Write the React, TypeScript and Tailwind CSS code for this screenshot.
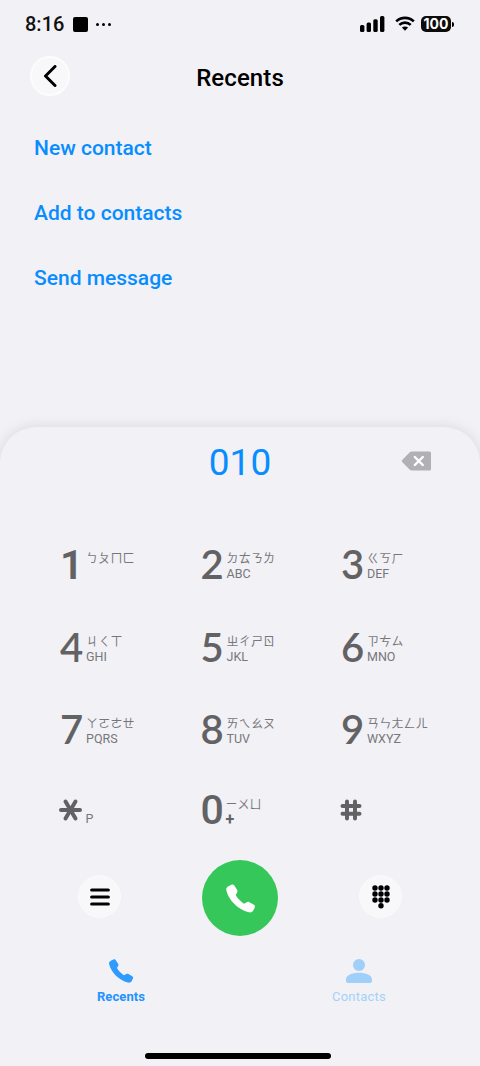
import React from "react";

const links = ["New contact", "Add to contacts", "Send message"];

const keys = [
  { digit: "1", zhuyin: "ㄅㄆㄇㄈ", letters: "" },
  { digit: "2", zhuyin: "ㄉㄊㄋㄌ", letters: "ABC" },
  { digit: "3", zhuyin: "ㄍㄎㄏ", letters: "DEF" },
  { digit: "4", zhuyin: "ㄐㄑㄒ", letters: "GHI" },
  { digit: "5", zhuyin: "ㄓㄔㄕㄖ", letters: "JKL" },
  { digit: "6", zhuyin: "ㄗㄘㄙ", letters: "MNO" },
  { digit: "7", zhuyin: "ㄚㄛㄜㄝ", letters: "PQRS" },
  { digit: "8", zhuyin: "ㄞㄟㄠㄡ", letters: "TUV" },
  { digit: "9", zhuyin: "ㄢㄣㄤㄥㄦ", letters: "WXYZ" },
];

const PHONE_PATH =
  "M6.600 1.800 3.500 3.300C1.600 4.300 1 5.600 1.400 7.500 3.200 17 13.500 27.800 24.500 30.200 26.500 30.600 28 30.200 29 28.600L30.600 25.600C31.200 24.300 31 23.300 29.900 22.500L25.200 19.800C24.100 19.200 23.100 19.300 22 20L19.600 21.300C16.500 19.500 12.700 15.700 11 12.400L12.300 10.200C13 9.100 13.100 8.100 12.400 7L9.600 2.700C8.900 1.600 7.900 1.200 6.600 1.800Z";

function StatusBar() {
  return (
    <div className="h-12 pl-[25px] pr-[26px] flex items-center justify-between">
      <div className="flex items-center">
        <span className="text-[20px] font-medium leading-6 text-[#111]">8:16</span>
        <span className="ml-[9px] w-[15px] h-[15px] rounded-[2px] bg-black" />
        <span className="ml-2 flex gap-[3px]">
          <i className="size-[3px] rounded-full bg-black" />
          <i className="size-[3px] rounded-full bg-black" />
          <i className="size-[3px] rounded-full bg-black" />
        </span>
      </div>
      <div className="flex items-center">
        <svg width="25" height="16" viewBox="0 0 25 16">
          <rect x="0" y="9" width="4.400" height="7" rx="1.500" />
          <rect x="6.600" y="6.500" width="4.400" height="9.500" rx="1.500" />
          <rect x="13.300" y="3.200" width="4.400" height="12.800" rx="1.500" />
          <rect x="20" y="0" width="4.400" height="16" rx="1.500" />
        </svg>
        <svg className="ml-[10px]" width="20" height="16" viewBox="0 0 20 16">
          <path d="M1.200 5.400C6 .700 14 .700 18.800 5.400" fill="none" stroke="#000" strokeWidth="2.600" />
          <path d="M4.300 8.900C7.500 5.900 12.500 5.900 15.700 8.900" fill="none" stroke="#000" strokeWidth="2.600" />
          <path d="M6.900 11.500C8.800 10 11.200 10 13.100 11.500L10 14.700Z" />
        </svg>
        <span className="ml-[6px] w-[30px] h-4 rounded-[5px] bg-[#0c0c0c] text-white text-[14px] font-bold leading-4 text-center font-[Inter,sans-serif]">
          100
        </span>
        <span className="ml-px w-[2px] h-[5px] rounded-r bg-black" />
      </div>
    </div>
  );
}

function DialKey({ digit, zhuyin, letters }: { digit: string; zhuyin: string; letters: string }) {
  return (
    <div className="flex h-[36px]">
      <span
        className={
          digit === "1"
            ? "w-[25px] pt-px text-[41px] leading-9 font-semibold font-[Roboto,sans-serif] text-[#626264]"
            : "w-[25px] text-[40px] leading-9 font-semibold font-[Lato,sans-serif] text-[#626264]"
        }
      >
        {digit}
      </span>
      <div className="ml-px mt-[3px] flex flex-col text-[#77777a] whitespace-nowrap">
        <span className="h-[17px] text-[12px] leading-[17px] tracking-[0.2px] font-normal font-['Noto_Sans_CJK_TC',sans-serif]">
          {zhuyin}
        </span>
        <span className="text-[12.500px] leading-[15px]">{letters}</span>
      </div>
    </div>
  );
}

function Dialer() {
  return (
    <div className="h-[639px] rounded-t-[36px] bg-[#f2f1f6] shadow-[0_0_14px_rgba(0,0,0,0.11)] flex flex-col">
      <div className="h-[70px] px-12 grid grid-cols-3 items-center">
        <span />
        <span className="text-center text-[37px] leading-[72px] text-[#088dff]">010</span>
        <svg className="justify-self-end mb-[5px]" width="31" height="20" viewBox="0 0 31 20">
          <path d="M11 .500H28.500Q30 .500 30 2V18Q30 19.500 28.500 19.500H11Q9.500 19.500 8.500 18.500L1.200 11Q.200 10 1.200 9L8.500 1.500Q9.500 .500 11 .500Z" fill="#b0b0b5" />
          <path d="m13.800 6 8 8m0-8-8 8" stroke="#fff" strokeWidth="2.400" strokeLinecap="round" />
        </svg>
      </div>
      <div className="mt-[49px] pl-[60px] grid grid-cols-[140.500px_140.500px_1fr] gap-y-[46.500px]">
        {keys.map((key) => (
          <DialKey key={key.digit} {...key} />
        ))}
      </div>
      <div className="mt-[44px] pl-[58.500px] h-[36px] grid grid-cols-[142px_139px_1fr]">
        <div className="flex items-center">
          <svg width="23" height="24" viewBox="0 0 23 24" stroke="#626264" strokeWidth="4" strokeLinecap="round" aria-label="*">
            <path d="M2 12h19M6.500 3.500l10 17M16.500 3.500l-10 17" />
          </svg>
          <span className="ml-1 mt-[18px] text-[12.500px] leading-4 text-[#77777a]">P</span>
        </div>
        <div className="flex">
          <span className="w-[25px] pt-px text-[41px] leading-9 font-medium tracking-[-1px] text-[#626264]">0</span>
          <div className="mt-1 flex flex-col text-[#77777a]">
            <span className="h-[17px] text-[12px] leading-[17px] font-['Noto_Sans_CJK_TC',sans-serif]">ㄧㄨㄩ</span>
            <span className="text-[16px] leading-[16px] font-bold text-[#626264]">+</span>
          </div>
        </div>
        <div className="flex items-center">
          <svg width="22" height="22" viewBox="0 0 22 22" stroke="#626264" strokeWidth="4" strokeLinecap="round" aria-label="#">
            <path d="M2.500 7h17M2.500 14.800h17M7 2.500v17M15 2.500v17" />
          </svg>
        </div>
      </div>
      <div className="mt-[33px] h-[76px] px-[78px] flex items-center justify-between">
        <button className="mb-[3px] size-[43px] rounded-full bg-[#f8f8fa] border border-[#fbfbfc] flex items-center justify-center">
          <svg width="20" height="18" viewBox="0 0 20 18" stroke="#000" strokeWidth="3.200" strokeLinecap="round">
            <path d="M1.700 2h16.600M1.700 9h16.600M1.700 16h16.600" />
          </svg>
        </button>
        <button className="size-[76px] rounded-full bg-[#35c759] flex items-center justify-center">
          <svg width="31" height="31" viewBox="0 0 32 32" fill="#fff">
            <path d={PHONE_PATH} />
          </svg>
        </button>
        <button className="mb-[3px] size-[43px] rounded-full bg-[#f8f8fa] border border-[#fbfbfc] flex items-center justify-center">
          <svg width="18" height="24" viewBox="0 0 18 24">
            {[3, 9, 15].map((x) =>
              [3, 9, 15].map((y) => <circle key={`${x}-${y}`} cx={x} cy={y} r="2.700" />)
            )}
            <circle cx="9" cy="20.800" r="2.700" />
          </svg>
        </button>
      </div>
      <div className="mt-[22px] px-[2px] grid grid-cols-2">
        <div className="flex flex-col items-center text-[#1f93ff]">
          <svg width="26" height="26" viewBox="0 0 32 32" fill="#2f9bff">
            <path d={PHONE_PATH} />
          </svg>
          <span className="text-[13px] leading-5 mt-[3px] font-bold tracking-[0.1px]">Recents</span>
        </div>
        <div className="flex flex-col items-center text-[#a4d1fb]">
          <svg width="26" height="26" viewBox="0 0 26 26" fill="#a0cffa">
            <circle cx="13" cy="7" r="6" />
            <path d="M0 21.500C0 17 6 14.700 13 14.700S26 17 26 21.500V23Q26 25 24 25H2Q0 25 0 23Z" />
          </svg>
          <span className="text-[13px] leading-5 mt-[3px] tracking-[0.250px]">Contacts</span>
        </div>
      </div>
      <div className="mt-auto mb-[7px] ml-[145px] w-[186px] h-[6px] rounded-full bg-black" />
    </div>
  );
}

export default function App() {
  return (
    <div className="w-[480px] h-[1066px] overflow-hidden bg-[#f2f1f6] font-[Roboto,sans-serif] flex flex-col">
      <StatusBar />
      <div className="h-14 px-[30px] grid grid-cols-3 items-center">
        <button className="size-10 rounded-full bg-[#f8f8fa] border-2 border-[#fcfcfd] flex items-center justify-center">
          <svg width="14" height="22" viewBox="0 0 14 22" fill="none" stroke="#000" strokeWidth="3" strokeLinecap="round" strokeLinejoin="round">
            <path d="M12 1.500 2.500 11l9.500 9.500" />
          </svg>
        </button>
        <h1 className="pt-[3px] text-center text-[24px] leading-8 font-medium tracking-[0.1px] text-black">Recents</h1>
      </div>
      <div className="pt-3 pl-[34px] flex flex-col">
        {links.map((link) => (
          <a key={link} className="h-[65px] flex items-center text-[21px] font-medium text-[#088dff]">
            {link}
          </a>
        ))}
      </div>
      <div className="mt-auto">
        <Dialer />
      </div>
    </div>
  );
}
